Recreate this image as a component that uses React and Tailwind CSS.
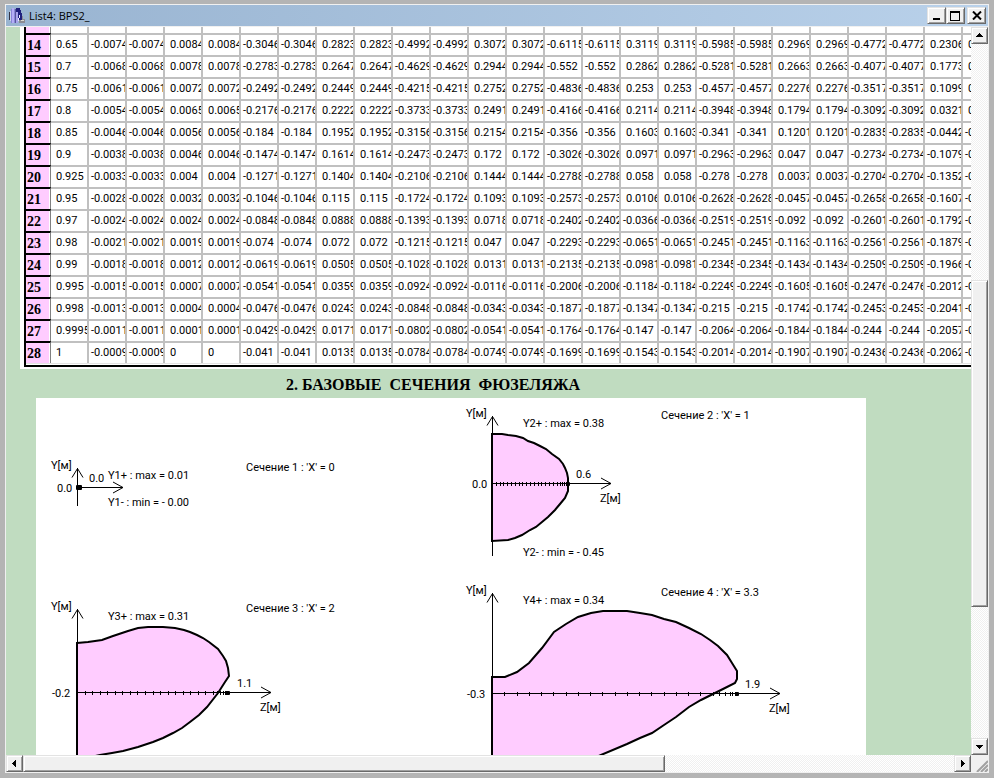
const ROWS = [
  [14, "0.65", "-0.0074 0.0084 -0.3046 0.2823 -0.4992 0.3072 -0.6115 0.3119 -0.5985 0.2969 -0.4772 0.2306"],
  [15, "0.7", "-0.0068 0.0078 -0.2783 0.2647 -0.4629 0.2944 -0.552 0.2862 -0.5281 0.2663 -0.4077 0.1773"],
  [16, "0.75", "-0.0061 0.0072 -0.2492 0.2449 -0.4215 0.2752 -0.4836 0.253 -0.4577 0.2276 -0.3517 0.1099"],
  [17, "0.8", "-0.0054 0.0065 -0.2176 0.2222 -0.3733 0.2491 -0.4166 0.2114 -0.3948 0.1794 -0.3092 0.0321"],
  [18, "0.85", "-0.0046 0.0056 -0.184 0.1952 -0.3156 0.2154 -0.356 0.1603 -0.341 0.1201 -0.2835 -0.0442"],
  [19, "0.9", "-0.0038 0.0046 -0.1474 0.1614 -0.2473 0.172 -0.3026 0.0971 -0.2963 0.047 -0.2734 -0.1079"],
  [20, "0.925", "-0.0033 0.004 -0.1271 0.1404 -0.2106 0.1444 -0.2788 0.058 -0.278 0.0037 -0.2704 -0.1352"],
  [21, "0.95", "-0.0028 0.0032 -0.1046 0.115 -0.1724 0.1093 -0.2573 0.0106 -0.2628 -0.0457 -0.2658 -0.1607"],
  [22, "0.97", "-0.0024 0.0024 -0.0848 0.0888 -0.1393 0.0718 -0.2402 -0.0366 -0.2519 -0.092 -0.2601 -0.1792"],
  [23, "0.98", "-0.0021 0.0019 -0.074 0.072 -0.1215 0.047 -0.2293 -0.0651 -0.2451 -0.1163 -0.2561 -0.1879"],
  [24, "0.99", "-0.0018 0.0012 -0.0619 0.0505 -0.1028 0.0131 -0.2135 -0.0981 -0.2345 -0.1434 -0.2509 -0.1966"],
  [25, "0.995", "-0.0015 0.0007 -0.0541 0.0359 -0.0924 -0.0116 -0.2006 -0.1184 -0.2249 -0.1605 -0.2476 -0.2012"],
  [26, "0.998", "-0.0013 0.0004 -0.0476 0.0243 -0.0848 -0.0343 -0.1877 -0.1347 -0.215 -0.1742 -0.2453 -0.2041"],
  [27, "0.9995", "-0.0011 0.0001 -0.0429 0.0171 -0.0802 -0.0541 -0.1764 -0.147 -0.2064 -0.1844 -0.244 -0.2057"],
  [28, "1", "-0.0009 0 -0.041 0.0135 -0.0784 -0.0749 -0.1699 -0.1543 -0.2014 -0.1907 -0.2436 -0.2062"],
];

const STATIONS = [
  0.05, 0.1, 0.15, 0.2, 0.25, 0.3, 0.35, 0.4, 0.45, 0.5, 0.55, 0.6, 0.65, 0.7, 0.75, 0.8, 0.85, 0.9,
  0.925, 0.95, 0.97, 0.98, 0.99, 0.995, 0.998, 1,
];

const SECTIONS = [
  {
    x: 77, y: 487, top: 468, bottom: 506, right: 123, length: 0,
    labels: [
      [51, 469, "Y[м]"], [57, 492, "0.0"], [89, 482, "0.0"], [108, 479, "Y1+ : max = 0.01"],
      [108, 506, "Y1- : min = - 0.00"], [246, 471, "Сечение 1 : 'X' = 0"],
    ],
  },
  {
    x: 492, y: 483, top: 416, bottom: 556, right: 611, length: 76,
    outline:
      "492,434 502,434 508,435 516,436 523,438 528,441 534,443 540,446 546,449 552,454 559,459 563,464 565,468 567,473 568,478 568,491 565,498 560,504 555,510 548,517 542,522 536,527 530,530 522,535 515,538 508,540 492,541",
    labels: [
      [466, 417, "Y[м]"], [472, 488, "0.0"], [576, 478, "0.6"], [600, 502, "Z[м]"], [523, 427, "Y2+ : max = 0.38"],
      [523, 556, "Y2- : min = - 0.45"], [661, 419, "Сечение 2 : 'X' = 1"],
    ],
  },
  {
    x: 77, y: 692, top: 609, bottom: 770, right: 271, length: 151,
    outline:
      "77,643 88,642 102,640 113,636 128,631 138,628 148,627 163,627 175,628 184,630 190,632 197,635 203,638 209,642 218,649 223,656 226,661 228,668 229,676 225,682 218,693 207,707 199,715 190,722 182,728 173,733 163,738 153,742 138,747 123,751 112,753 100,755 77,760",
    labels: [
      [51, 610, "Y[м]"], [52, 697, "-0.2"], [237, 687, "1.1"], [260, 711, "Z[м]"], [108, 620, "Y3+ : max = 0.31"],
      [246, 612, "Сечение 3 : 'X' = 2"],
    ],
  },
  {
    x: 492, y: 693, top: 593, bottom: 770, right: 780, length: 245,
    outline:
      "492,677 505,677 517,672 529,663 542,648 554,632 566,624 578,617 591,613 603,611 615,611 627,611 640,613 652,615 664,619 676,622 689,628 701,634 710,640 718,646 727,655 732,663 737,671 737,679 735,683 725,688 713,694 701,700 689,707 676,717 664,725 652,733 640,738 627,744 601,755 570,768 492,770",
    labels: [
      [466, 594, "Y[м]"], [467, 698, "-0.3"], [745, 688, "1.9"], [769, 712, "Z[м]"], [523, 604, "Y4+ : max = 0.34"],
      [661, 596, "Сечение 4 : 'X' = 3.3"],
    ],
  },
];

function Section({ x, y, top, bottom, right, length, outline, labels }) {
  return (
    <g>
      {outline && <polygon points={outline} fill="#ffccff" stroke="#000" strokeWidth="2" />}
      <g stroke="#000" fill="none" shapeRendering="crispEdges">
        <path d={`M${x + 0.5} ${top}V${bottom}M${x} ${y + 0.5}H${right}`} />
        {length > 0 &&
          STATIONS.map((s) => {
            const tx = Math.round(x + s * length) + 0.5;
            return <path key={s} d={`M${tx} ${y - 1}v4`} />;
          })}
      </g>
      <path
        d={`M${x - 5} ${top + 9.5}L${x + 0.5} ${top + 0.5}L${x + 6} ${top + 9.5}M${right - 10} ${y - 5}L${right} ${y + 0.5}L${right - 10} ${y + 6}`}
        fill="none"
        stroke="#000"
      />
      <rect x={length ? x + length - 1 : x - 1} y={y - 2 + (length ? 1 : 0)} width={length ? 3 : 6} height={length ? 4 : 5} rx="1" />
      {labels.map(([lx, ly, text]) => (
        <text key={text + ly + lx} x={lx} y={ly} className="whitespace-pre">
          {text}
        </text>
      ))}
    </g>
  );
}

const BEVEL =
  "shrink-0 bg-[#f0f0f0] border border-t-[#e3e3e3] border-l-[#e3e3e3] border-b-[#696969] border-r-[#696969] shadow-[inset_1px_1px_0_#fff,inset_-1px_-1px_0_#a0a0a0]";
const TRACK = "bg-[repeating-conic-gradient(#ffffff_0_25%,#f0f0f0_0_50%)] bg-[length:2px_2px]";

function BevelButton({ label, className, children }) {
  return (
    <button type="button" aria-label={label} className={`${BEVEL} flex items-center justify-center ${className}`}>
      {children}
    </button>
  );
}

function Arrow({ d }) {
  return (
    <svg viewBox="0 0 9 9" className="size-[9px]" aria-hidden="true" shapeRendering="crispEdges">
      <path d={d} />
    </svg>
  );
}

function Cell({ value }) {
  return (
    <td className="h-[22px] overflow-hidden border-t-2 border-r-2 border-[#c0c0c0] bg-white p-0 align-top">
      <div className={`h-5 overflow-hidden whitespace-nowrap leading-5 ${value.startsWith("-") ? "pl-[2px]" : "pl-[5px]"}`}>
        {value}
      </div>
    </td>
  );
}

function StationTable() {
  return (
    <div className="ml-[14px] w-max border-b-2 border-white bg-white pl-1">
      <table className="w-[977px] table-fixed border-separate border-spacing-0 border-b-2 border-l-2 border-black font-['Roboto','Liberation_Sans',sans-serif] text-[11px]">
        <colgroup>
          <col className="w-[25px]" />
          {Array.from({ length: 25 }, (_, i) => (
            <col key={i} className="w-[38px]" />
          ))}
        </colgroup>
        <tbody>
          <tr>
            <th scope="row" className="border-r border-[#808080] bg-white p-0 pr-px">
              <div className="flex h-[6px] items-end overflow-hidden bg-[#ffccff] pl-px font-['Liberation_Serif',serif] text-[14px] leading-5">13</div>
            </th>
            {Array.from({ length: 25 }, (_, i) => (
              <td key={i} className="border-r-2 border-[#c0c0c0] bg-white p-0" />
            ))}
          </tr>
          {ROWS.map(([n, station, list]) => (
            <tr key={n}>
              <th scope="row" className="border-t-2 border-r border-t-black border-r-[#808080] bg-white p-0 pr-px text-left align-top">
                <div className="h-5 bg-[#ffccff] pl-px font-['Liberation_Serif',serif] text-[14px] leading-[22px]">{n}</div>
              </th>
              <Cell value={station} />
              {list.split(" ").flatMap((v, i) => [<Cell key={`a${i}`} value={v} />, <Cell key={`b${i}`} value={v} />])}
            </tr>
          ))}
        </tbody>
        <tfoot>
          <tr>
            <td colSpan={26} className="h-[2px] border-t border-[#e3e3e3] bg-white p-0" />
          </tr>
        </tfoot>
      </table>
    </div>
  );
}

export default function App() {
  return (
    <div className="flex h-screen w-full flex-col bg-[#b4b4b4] px-[5px] pt-1 pb-[5px] text-black">
      <div className="flex min-h-0 flex-1 flex-col border border-[#f0f0f0] bg-[#f0f0f0]">
        <header className="flex h-[22px] shrink-0 items-center border-b border-[#f0f0f0] bg-linear-to-r from-[#99b4d1] to-[#b9d1ea] pr-[2px] pl-[3px]">
          <svg viewBox="0 0 17 17" className="size-[17px] shrink-0" aria-hidden="true" shapeRendering="crispEdges">
            <path d="M0 5h1v8H0z" fill="#334" />
            <path d="M1 4h1v10H1z" fill="#c9d4ea" />
            <path d="M2 2h4v14H2z" fill="#8a84d8" />
            <path d="M3 1h2v15H3z" fill="#b4aef6" />
            <path d="M6 2h1v14H6z" fill="#55569a" />
            <path d="M7 1h4v2h1v3h1v4h1v4H7z" fill="#20207e" />
            <path d="M7 5h2v11H7z" fill="#a9a4ec" />
            <path d="M10 8h1v3h-1v3H9v-3h1z" fill="#e8e8ff" />
            <path d="M10 13h3v-4h1v3h2v4h-6z" fill="#8b8b93" />
            <path d="M12 13h3v1h-3z" fill="#d8d8d0" />
          </svg>
          <h1 className="ml-[3px] flex-1 font-['Open_Sans',sans-serif] text-[11px] leading-5">List4: BPS2_</h1>
          <BevelButton label="Minimize" className="h-[17px] w-[19px]">
            <Arrow d="M1 7h7v2H1z" />
          </BevelButton>
          <BevelButton label="Maximize" className="h-[17px] w-[19px]">
            <svg viewBox="0 0 11 10" className="h-[10px] w-[11px]" aria-hidden="true" shapeRendering="crispEdges">
              <path fillRule="evenodd" d="M0 0h10v10H0zM1 2v7h8V2z" />
            </svg>
          </BevelButton>
          <BevelButton label="Close" className="ml-[2px] h-[17px] w-[19px]">
            <svg viewBox="0 0 10 9" className="h-[9px] w-[10px]" aria-hidden="true">
              <path d="M1 .5l8 8M9 .5l-8 8" stroke="#000" strokeWidth="2" />
            </svg>
          </BevelButton>
        </header>

        <div className="flex min-h-0 flex-1">
          <main className="min-w-0 flex-1 overflow-hidden bg-[#c0dcc0]">
            <StationTable />
            <h2 className="flex h-[29px] items-center whitespace-pre pt-[2px] pl-[280px] font-['Liberation_Serif',serif] text-[16px] leading-5 font-bold">
              2. БАЗОВЫЕ  СЕЧЕНИЯ  ФЮЗЕЛЯЖА
            </h2>
            <svg
              viewBox="36 398 830 380"
              className="ml-[30px] block h-[380px] w-[830px] bg-white font-['Roboto','Liberation_Sans',sans-serif] text-[11px]"
              role="img"
              aria-label="Базовые сечения фюзеляжа"
            >
              {SECTIONS.map((s, i) => (
                <Section key={i} {...s} />
              ))}
            </svg>
          </main>
          <div className={`flex w-[17px] shrink-0 flex-col ${TRACK}`}>
            <BevelButton label="Scroll up" className="h-[17px] w-full">
              <Arrow d="M4 2h1v1h1v1h1v1h1v1H1V5h1V4h1V3h1z" />
            </BevelButton>
            <div className="grow-[237] basis-0" />
            <div className={`grow-[326] basis-0 ${BEVEL}`} />
            <div className="grow-[131] basis-0" />
            <BevelButton label="Scroll down" className="h-[17px] w-full">
              <Arrow d="M1 3h7v1H7v1H6v1H5v1H4V6H3V5H2V4H1z" />
            </BevelButton>
          </div>
        </div>

        <div className="flex h-[17px] shrink-0">
          <div className={`flex min-w-0 flex-1 ${TRACK}`}>
            <BevelButton label="Scroll left" className="h-full w-[17px]">
              <Arrow d="M5 1h1v7H5V7H4V6H3V5H2V4h1V3h1V2h1z" />
            </BevelButton>
            <div className={`grow-[641] basis-0 ${BEVEL}`} />
            <div className="grow-[290] basis-0" />
            <BevelButton label="Scroll right" className="h-full w-[17px]">
              <Arrow d="M3 1h1v1h1v1h1v1h1v1H6v1H5v1H4v1H3z" />
            </BevelButton>
          </div>
          <svg viewBox="0 0 17 17" className="size-[17px] shrink-0" aria-hidden="true">
            <path d="M6 17L17 6M10 17l7-7M14 17l3-3" stroke="#a0a0a0" strokeWidth="2" />
          </svg>
        </div>
      </div>
    </div>
  );
}
